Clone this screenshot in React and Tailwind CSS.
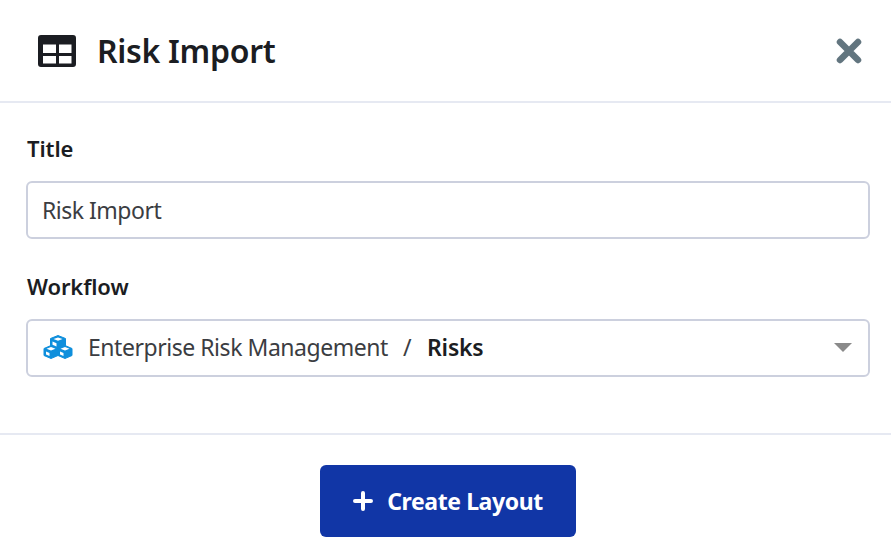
import React from 'react';

const TableIcon = () => (
  <svg width="38" height="32" viewBox="0 0 38 32" className="shrink-0">
    <path fillRule="evenodd" fill="#1b1d22" d="M3 0h32a3 3 0 0 1 3 3v26a3 3 0 0 1-3 3H3a3 3 0 0 1-3-3V3a3 3 0 0 1 3-3zM5 9.500v8.500h13v-8.500zM21 9.500v8.500h12.500v-8.500zM5 21v7.500h13v-7.500zM21 21v7.500h12.500v-7.500z" />
  </svg>
);

const CloseIcon = () => (
  <svg width="26" height="26" viewBox="0 0 26 26">
    <path d="M4 4L22 22M22 4L4 22" stroke="#62757f" strokeWidth="6.5" strokeLinecap="round" />
  </svg>
);

const CubesIcon = () => (
  <svg width="30" height="26" viewBox="0 0 30 26" className="shrink-0">
    <g fill="#0f8fdc" stroke="#0f8fdc" strokeWidth="1" strokeLinejoin="round">
      <path d="M15 .5l7.500 3v7l-7.500 3-7.500-3v-7z" />
      <path d="M8 10.500l7 3v7l-7 3-7-3v-7z" />
      <path d="M22 10.500l7 3v7l-7 3-7-3v-7z" />
    </g>
    <g fill="#fff">
      <path d="M10.500 4l4.500 1.800 4.500-1.800-4.500-1.600z" />
      <path d="M9.500 6.500l4 1.700v3.300l-4-1.700z" />
      <path d="M3.500 13.800l4.500 1.800 4.500-1.800-4.500-1.700z" />
      <path d="M17.500 13.800l4.500 1.800 4.500-1.800-4.500-1.700z" />
      <path d="M3 16.500l3.500 1.500v3l-3.500-1.500z" />
      <path d="M17 16.500l3.500 1.500v3l-3.500-1.500z" />
    </g>
  </svg>
);

export default function App() {
  return (
    <div className="w-[891px] h-[559px] bg-white overflow-hidden text-[#1b1d22] font-['Noto_Sans',sans-serif]">
      <div className="h-[103px] border-b-2 border-[#e6e9f2] flex items-center pl-[38px] pr-[29px]">
        <TableIcon />
        <span className="ml-[21px] text-[32px] leading-[40px] font-semibold tracking-[-0.3px]">Risk Import</span>
        <button className="ml-auto">
          <CloseIcon />
        </button>
      </div>

      <div className="pl-[26px] pr-[21px] pt-[30px] border-b-2 border-[#e6e9f2] h-[332px]">
        <div className="pl-px text-[22px] leading-[32px] font-semibold tracking-[-0.1px] -translate-y-[1px]">Title</div>
        <div className="mt-[16px] h-[58px] border-2 border-[#ccd0de] rounded-[6px] flex items-center px-[14px] text-[23px] tracking-[-0.5px] text-[#3b3d42]">
          Risk Import
        </div>
        <div className="mt-[32px] pl-px text-[22px] leading-[32px] font-semibold tracking-[-0.1px] -translate-y-[1px]">Workflow</div>
        <div className="mt-[16px] h-[58px] border-2 border-[#ccd0de] rounded-[6px] flex items-center pl-[15px] pr-[16px] text-[23px] tracking-[-0.46px] text-[#3b3d42]">
          <CubesIcon />
          <span className="ml-[15px] leading-[30px] pb-[3px]">Enterprise Risk Management</span>
          <span className="ml-[15px] leading-[30px] pb-[3px]">/</span>
          <span className="ml-[16px] leading-[30px] pb-[3px] font-semibold tracking-[-0.2px] text-[#1b1d22]">Risks</span>
          <span className="ml-auto -translate-y-[1px] w-0 h-0 border-l-[9px] border-r-[9px] border-t-[9px] border-l-transparent border-r-transparent border-t-[#8a8a8a]" />
        </div>
      </div>

      <div className="flex justify-center pt-[30px] pl-[5px]">
        <button className="w-[256px] h-[72px] rounded-[6px] bg-[#1136a6] text-white flex items-center justify-center gap-[14px] text-[23px] font-bold tracking-[-0.4px]">
          <svg width="20" height="20" viewBox="0 0 20 20">
            <path d="M10 2v16M2 10h16" stroke="#fff" strokeWidth="4" strokeLinecap="round" />
          </svg>
          Create Layout
        </button>
      </div>
    </div>
  );
}
